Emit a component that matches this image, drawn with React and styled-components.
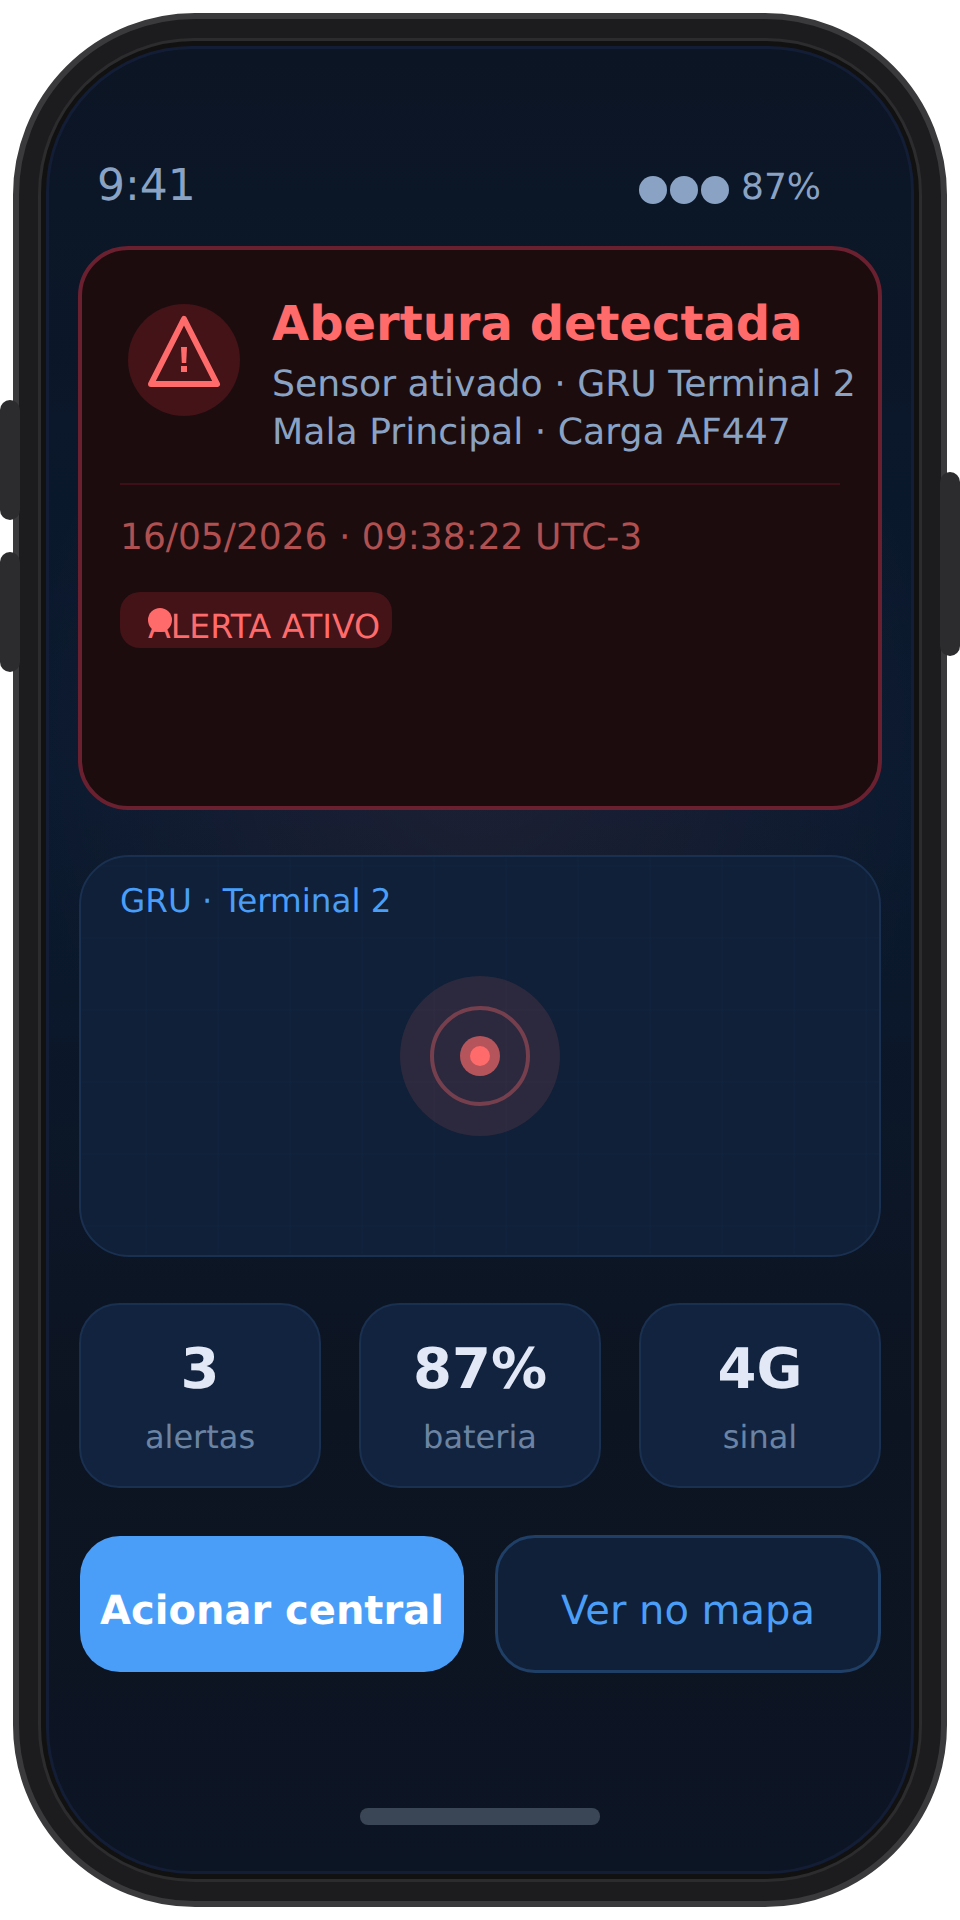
import React from "react";
import styled, { createGlobalStyle } from "styled-components";

const Global = createGlobalStyle`
  html, body {
    margin: 0;
    padding: 0;
    background: #fff;
  }
  * {
    box-sizing: border-box;
  }
  body {
    font-family: "DejaVu Sans", "Liberation Sans", sans-serif;
    text-rendering: geometricPrecision;
  }
`;

const Page = styled.div`
  width: 960px;
  height: 1920px;
  padding: 13px;
  position: relative;
  overflow: hidden;
`;

const SideButton = styled.div`
  position: absolute;
  width: 20px;
  background: #2c2c2e;
  border-radius: 10px;
  top: ${(p) => p.$top}px;
  height: ${(p) => p.$height}px;
  ${(p) => (p.$right ? "right: 0;" : "left: 0;")}
`;

const Phone = styled.div`
  width: 934px;
  height: 1894px;
  padding: 19px;
  background: #1c1c1e;
  border: 6px solid #3a3a3c;
  border-radius: 182px;
`;

const Bezel = styled.div`
  height: 100%;
  padding: 5px;
  background: #111;
  border: 3px solid #2c2c2e;
  border-radius: 156px;
`;

const Screen = styled.div`
  height: 100%;
  padding: 108px 31px 0;
  border: 3px solid #131e36;
  border-radius: 146px;
  display: flex;
  flex-direction: column;
  background:
    radial-gradient(ellipse 470px 500px at 50% 38%, rgba(255, 107, 107, 0.08), rgba(255, 107, 107, 0) 100%),
    linear-gradient(180deg, #0c1524 0%, #0a1a30 40%, #0d1421 75%, #0c1524 100%);
`;

const StatusBar = styled.div`
  height: 56px;
  padding: 0 59px 0 17px;
  display: flex;
  align-items: center;
  justify-content: space-between;
  color: #8aa3c4;
`;

const Clock = styled.span`
  font-size: 44px;
`;

const StatusRight = styled.div`
  display: flex;
  align-items: center;
  gap: 12px;
  font-size: 36px;
  line-height: 44px;
  padding-top: 6px;
`;

const Dots = styled.div`
  display: flex;
  gap: 3px;
  margin-top: 4px;
`;

const Dot = styled.span`
  width: 28px;
  height: 28px;
  border-radius: 50%;
  background: #8aa3c4;
`;

const AlertCard = styled.section`
  height: 564px;
  margin: 33px -2px 0;
  padding: 54px 0 0 38px;
  background: #1c0c0e;
  border: 4px solid #6b2030;
  border-radius: 50px;
`;

const AlertTop = styled.div`
  display: flex;
  gap: 32px;
`;

const IconCircle = styled.div`
  width: 112px;
  height: 112px;
  margin-left: 8px;
  flex: none;
  border-radius: 50%;
  background: #431317;
`;

const AlertText = styled.div`
  display: flex;
  flex-direction: column;
  margin-top: -7px;
  white-space: nowrap;
`;

const AlertTitle = styled.h1`
  margin: 0 0 9px;
  font-size: 48px;
  line-height: 54px;
  font-weight: 700;
  color: #ff6b6b;
`;

const AlertLine = styled.p`
  margin: 0;
  font-size: 36.2px;
  line-height: 48px;
  color: #8aa3c4;
`;

const Divider = styled.div`
  width: 720px;
  height: 2px;
  margin-top: 27px;
  background: #3d1018;
`;

const AlertDate = styled.div`
  margin-top: 31px;
  font-size: 36px;
  line-height: 44px;
  color: #b05050;
`;

const Pill = styled.div`
  position: relative;
  width: 272px;
  height: 56px;
  margin-top: 32px;
  padding-left: 28px;
  background: #431317;
  border-radius: 20px;
  font-size: 33.2px;
  line-height: 69px;
  white-space: nowrap;
  color: #ff6b6b;
`;

const PillDot = styled.span`
  position: absolute;
  left: 28px;
  top: 16px;
  width: 24px;
  height: 24px;
  border-radius: 50%;
  background: #ff6b6b;
`;

const MapCard = styled.section`
  height: 402px;
  margin: 45px -1px 0;
  padding: 24px 39px;
  position: relative;
  border: 2px solid #1a3050;
  border-radius: 50px;
  background-color: #0f2038;
  background-image:
    linear-gradient(rgba(30, 58, 95, 0.08) 2px, transparent 2px),
    linear-gradient(90deg, rgba(30, 58, 95, 0.08) 2px, transparent 2px);
  background-size: 72px 72px;
  background-position: 64px 8px;
  font-size: 32.6px;
  line-height: 40px;
  color: #4a9ef8;
`;

const Marker = styled.svg`
  position: absolute;
  left: 319px;
  top: 119px;
`;

const Stats = styled.div`
  margin: 46px -1px 0;
  display: grid;
  grid-template-columns: repeat(3, 242px);
  justify-content: space-between;
`;

const Stat = styled.div`
  height: 185px;
  padding-top: 31px;
  display: flex;
  flex-direction: column;
  align-items: center;
  background: #12233f;
  border: 2px solid #1a3050;
  border-radius: 40px;
`;

const StatValue = styled.div`
  font-size: 56px;
  line-height: 68px;
  font-weight: 700;
  color: #e2e8f5;
`;

const StatLabel = styled.div`
  margin-top: 13px;
  font-size: 32px;
  line-height: 40px;
  color: #6b84a3;
`;

const Actions = styled.div`
  margin: 48px -1px 0 0;
  display: grid;
  grid-template-columns: 384px 386px;
  justify-content: space-between;
`;

const Action = styled.button`
  height: ${(p) => (p.$primary ? "136px" : "138px")};
  margin-top: ${(p) => (p.$primary ? "0" : "-1px")};
  padding: 14px 0 0;
  border-radius: 40px;
  font-family: inherit;
  text-rendering: geometricPrecision;
  white-space: nowrap;
  font-size: 40px;
  font-weight: ${(p) => (p.$primary ? 700 : 400)};
  color: ${(p) => (p.$primary ? "#fff" : "#4a9ef8")};
  background: ${(p) => (p.$primary ? "#4a9ef8" : "#0f2038")};
  border: ${(p) => (p.$primary ? "none" : "3px solid #1f3f66")};
`;

const HomeBar = styled.div`
  width: 240px;
  height: 17px;
  margin: 135px auto 0;
  background: #3a4555;
  border-radius: 8px;
`;

const stats = [
  { value: "3", label: "alertas" },
  { value: "87%", label: "bateria" },
  { value: "4G", label: "sinal" },
];

export default function App() {
  return (
    <Page>
      <Global />
      <SideButton $top={400} $height={120} />
      <SideButton $top={552} $height={120} />
      <SideButton $right $top={472} $height={184} />
      <Phone>
        <Bezel>
          <Screen>
            <StatusBar>
              <Clock>9:41</Clock>
              <StatusRight>
                <Dots>
                  <Dot />
                  <Dot />
                  <Dot />
                </Dots>
                87%
              </StatusRight>
            </StatusBar>

            <AlertCard>
              <AlertTop>
                <IconCircle>
                  <svg width="112" height="112" viewBox="0 0 112 112" fill="none">
                    <path d="M56 15 L89 80 L23 80 Z" stroke="#ff6b6b" strokeWidth="6" strokeLinejoin="round" />
                    <path d="M53 43 L59 43 L58.2 59 L53.8 59 Z" fill="#ff6b6b" />
                    <rect x="53" y="62" width="6" height="6" fill="#ff6b6b" />
                  </svg>
                </IconCircle>
                <AlertText>
                  <AlertTitle>Abertura detectada</AlertTitle>
                  <AlertLine>Sensor ativado · GRU Terminal 2</AlertLine>
                  <AlertLine>Mala Principal · Carga AF447</AlertLine>
                </AlertText>
              </AlertTop>
              <Divider />
              <AlertDate>16/05/2026 · 09:38:22 UTC-3</AlertDate>
              <Pill>
                ALERTA ATIVO
                <PillDot />
              </Pill>
            </AlertCard>

            <MapCard>
              GRU · Terminal 2
              <Marker width="160" height="160" viewBox="0 0 160 160" fill="none">
                <circle cx="80" cy="80" r="80" fill="#ff6b6b" fillOpacity="0.12" />
                <circle cx="80" cy="80" r="48" stroke="#ff6b6b" strokeOpacity="0.35" strokeWidth="4" />
                <circle cx="80" cy="80" r="20" fill="#ff6b6b" fillOpacity="0.65" />
                <circle cx="80" cy="80" r="10" fill="#ff6b6b" />
              </Marker>
            </MapCard>

            <Stats>
              {stats.map((s) => (
                <Stat key={s.label}>
                  <StatValue>{s.value}</StatValue>
                  <StatLabel>{s.label}</StatLabel>
                </Stat>
              ))}
            </Stats>

            <Actions>
              <Action $primary>Acionar central</Action>
              <Action>Ver no mapa</Action>
            </Actions>

            <HomeBar />
          </Screen>
        </Bezel>
      </Phone>
    </Page>
  );
}
